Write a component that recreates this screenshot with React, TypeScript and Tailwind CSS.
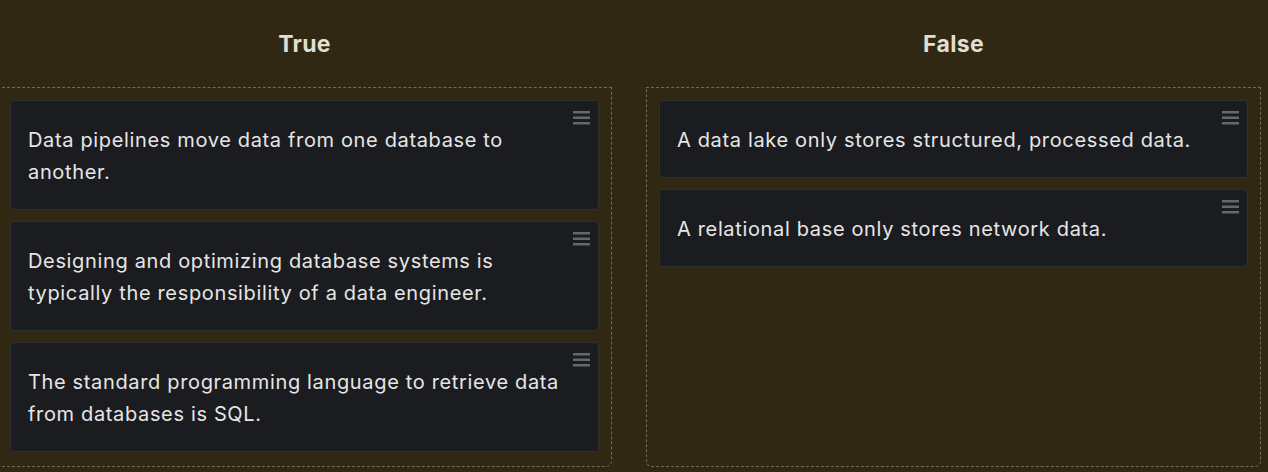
import React from 'react';

const trueItems = [
  'Data pipelines move data from one database to another.',
  'Designing and optimizing database systems is typically the responsibility of a data engineer.',
  'The standard programming language to retrieve data from databases is SQL.',
];

const falseItems = [
  'A data lake only stores structured, processed data.',
  'A relational base only stores network data.',
];

const Handle = () => (
  <svg className="absolute right-[8px] top-[10px]" width="17" height="14" viewBox="0 0 17 14" fill="#66676a">
    <rect x="0" y="0" width="17" height="2.5" />
    <rect x="0" y="5.5" width="17" height="2.5" />
    <rect x="0" y="11" width="17" height="2.5" />
  </svg>
);

const Card = ({ text }: { text: string }) => (
  <div className="relative rounded-[4px] border border-[#2f3033] bg-[#1b1c1f] pl-[17px] pr-[22px] pt-[23px] pb-[21px] text-[20px] leading-[32px] tracking-[0.65px] text-[#e6e6e6]">
    <Handle />
    {text}
  </div>
);

const Column = ({ title, items }: { title: string; items: string[] }) => (
  <div className="flex flex-col">
    <h2 className="h-[87px] pt-[28px] text-center text-[23px] font-bold leading-[32px] tracking-[0.3px] text-[#e3ded2]">{title}</h2>
    <div className="flex h-[380px] flex-col gap-[11px] rounded-b-[6px] border border-dashed border-[#766a4f] p-[12px]">
      {items.map(t => (
        <Card key={t} text={t} />
      ))}
    </div>
  </div>
);

export default function App() {
  return (
    <div className="h-[472px] w-[1268px] overflow-hidden bg-[#302813]" style={{ fontFamily: 'Inter, "Noto Sans", sans-serif' }}>
      <div className="-ml-[3px] grid w-[1264px] grid-cols-2 gap-[34px]">
        <Column title="True" items={trueItems} />
        <Column title="False" items={falseItems} />
      </div>
    </div>
  );
}
